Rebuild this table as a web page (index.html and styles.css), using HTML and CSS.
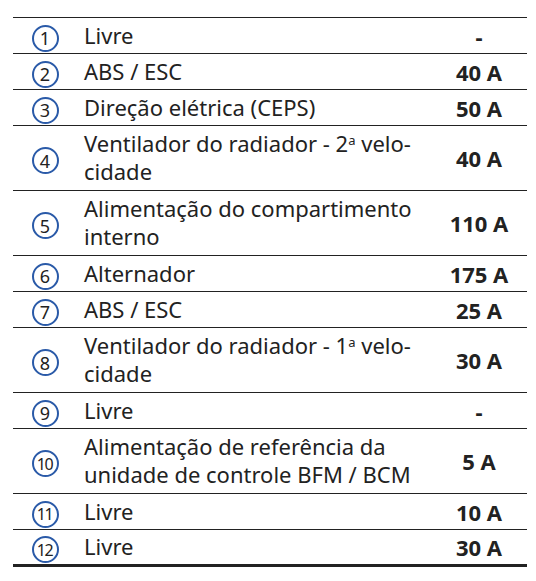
FILE: index.html
```html
<!DOCTYPE html>
<html lang="pt">
<head>
<meta charset="utf-8">
<link rel="stylesheet" href="styles.css">
</head>
<body>
<table class="fuses">
  <tbody>
    <tr class="r1"><td class="num"><span class="circ">1</span></td><td class="desc">Livre</td><td class="val">-</td></tr>
    <tr class="r1"><td class="num"><span class="circ">2</span></td><td class="desc">ABS / ESC</td><td class="val">40 A</td></tr>
    <tr class="r1"><td class="num"><span class="circ">3</span></td><td class="desc">Direção elétrica (CEPS)</td><td class="val">50 A</td></tr>
    <tr class="r2"><td class="num"><span class="circ">4</span></td><td class="desc">Ventilador do radiador - 2<sup>a</sup> velo-<br>cidade</td><td class="val">40 A</td></tr>
    <tr class="r2"><td class="num"><span class="circ">5</span></td><td class="desc">Alimentação do compartimento<br>interno</td><td class="val">110 A</td></tr>
    <tr class="r1"><td class="num"><span class="circ">6</span></td><td class="desc">Alternador</td><td class="val">175 A</td></tr>
    <tr class="r1"><td class="num"><span class="circ">7</span></td><td class="desc">ABS / ESC</td><td class="val">25 A</td></tr>
    <tr class="r2"><td class="num"><span class="circ">8</span></td><td class="desc">Ventilador do radiador - 1<sup>a</sup> velo-<br>cidade</td><td class="val">30 A</td></tr>
    <tr class="r1"><td class="num"><span class="circ">9</span></td><td class="desc">Livre</td><td class="val">-</td></tr>
    <tr class="r2"><td class="num"><span class="circ two">10</span></td><td class="desc">Alimentação de referência da<br>unidade de controle BFM / BCM</td><td class="val">5 A</td></tr>
    <tr class="r1"><td class="num"><span class="circ two">11</span></td><td class="desc">Livre</td><td class="val">10 A</td></tr>
    <tr class="r1 last"><td class="num"><span class="circ two">12</span></td><td class="desc">Livre</td><td class="val">30 A</td></tr>
  </tbody>
</table>
</body>
</html>
```
FILE: styles.css
```css
html, body {
  margin: 0;
  padding: 0;
  background: #fff;
}
body {
  padding: 17px 0 0 13px;
  font-family: "Noto Sans", "Open Sans", sans-serif;
  color: #222;
}
.fuses {
  width: 514px;
  border-collapse: collapse;
  border-top: 1px solid #222;
  border-bottom: 3px solid #222;
  font-size: 22px;
  line-height: 28px;
}
.fuses td {
  border-bottom: 1px solid #222;
  padding: 0;
  vertical-align: middle;
}
.r1 td { height: 35px; }
.r2 td { height: 64px; }
.r1 td.desc { height: 33px; padding-bottom: 2px; }
.r2 td.desc { height: 62px; padding-bottom: 2px; }
.last td { border-bottom: none; height: 34px; }
.last td.desc { height: 32px; }
.num {
  width: 64px;
  text-align: center;
}
.circ {
  display: inline-flex;
  align-items: center;
  justify-content: center;
  width: 23px;
  height: 23px;
  border: 2px solid #2a5aa8;
  border-radius: 50%;
  font-size: 18px;
  line-height: 1;
  color: #222;
  vertical-align: middle;
  box-sizing: content-box;
  position: relative;
  top: 1px;
}
.circ.two {
  font-size: 16px;
  letter-spacing: -1.5px;
  text-indent: -1px;
}
.desc {
  padding-left: 7px !important;
}
.desc sup {
  font-size: 13px;
  line-height: 0;
  vertical-align: 7px;
}
.val {
  width: 96px;
  text-align: center;
  font-weight: 700;
}
```
